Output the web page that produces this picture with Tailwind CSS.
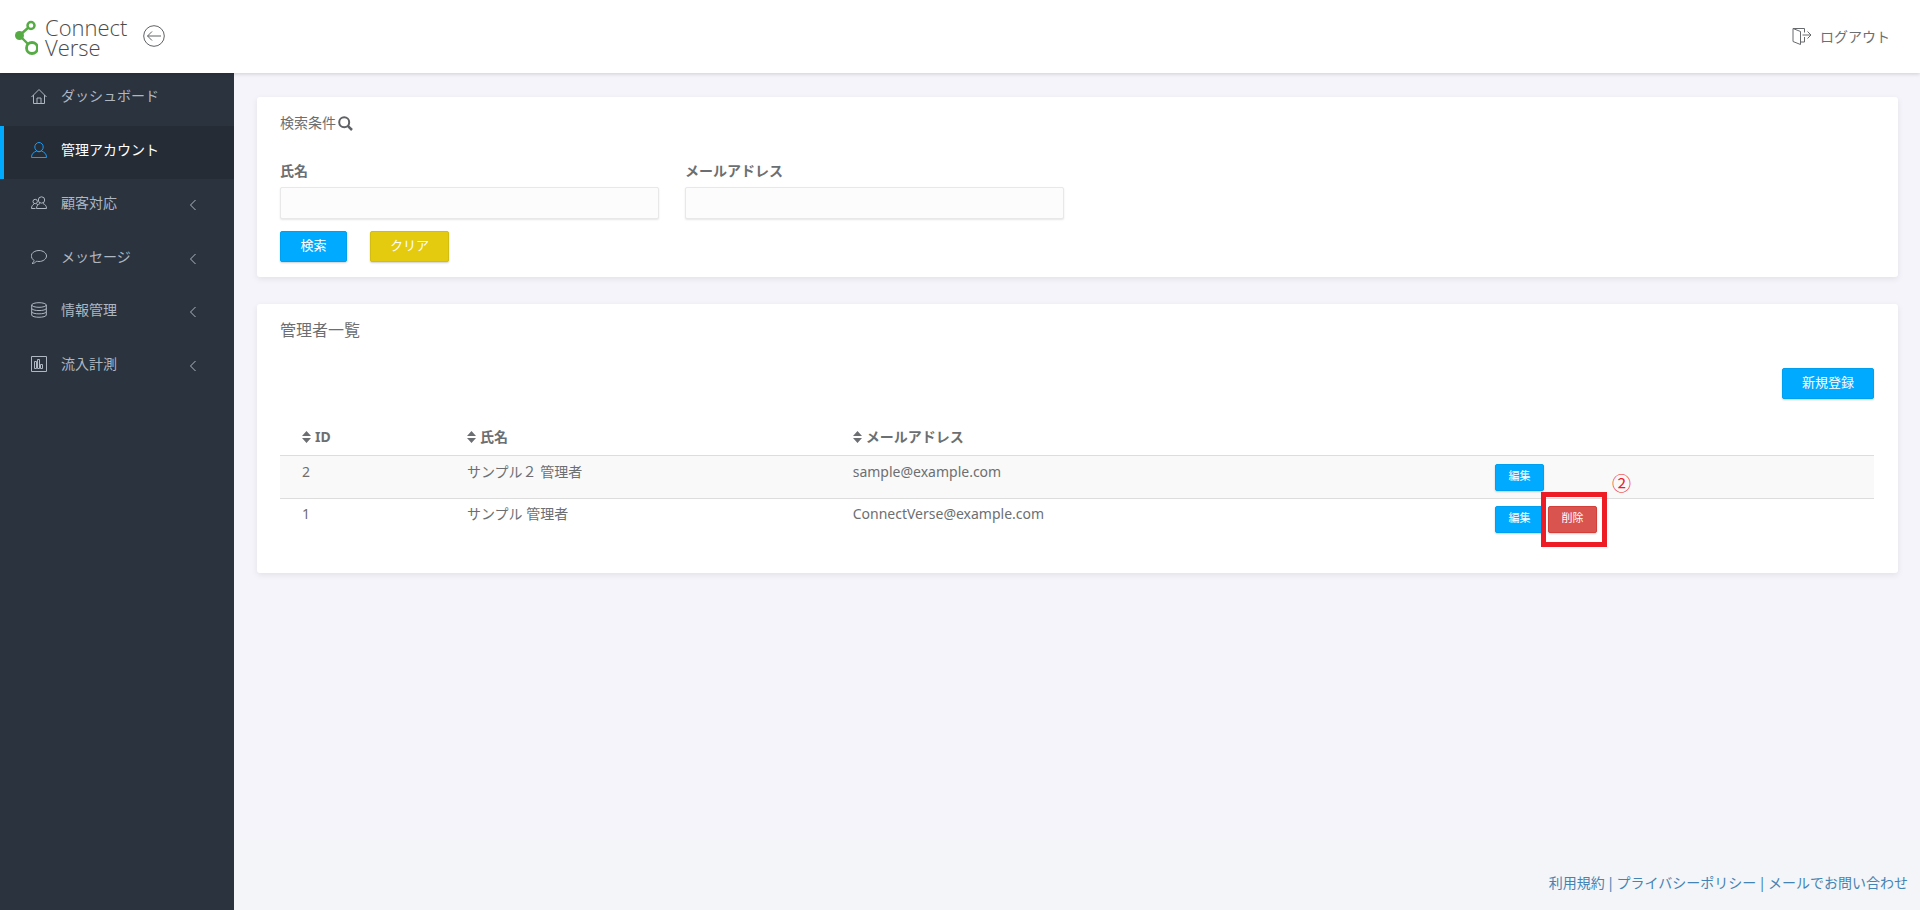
<!DOCTYPE html>
<html lang="ja">
<head>
<meta charset="utf-8">
<meta name="viewport" content="width=device-width, initial-scale=1">
<title>管理アカウント | Connect Verse</title>
<script src="https://cdn.jsdelivr.net/npm/@tailwindcss/browser@4"></script>
</head>
<body class="flex min-h-screen flex-col bg-[#f5f4fa] font-['Noto_Sans','Noto_Sans_CJK_JP',sans-serif] text-sm text-[#6c6f72]">

<header class="relative z-10 flex h-[73px] items-center justify-between bg-white pr-[30px] pl-[14px] shadow-[0_1px_4px_rgba(0,0,0,0.16)]">
  <div class="flex items-center gap-4">
    <a href="#" class="flex items-center gap-[7px] text-[#4c4c4c]" aria-label="Connect Verse">
      <svg class="h-9 w-6" viewBox="0 0 24 36" fill="none" stroke="#57ab45">
        <path d="M6 16 15 8M7 18l9 9" stroke-width="2.4"/>
        <circle cx="5.500" cy="16.500" r="4.500" fill="#57ab45" stroke="none"/>
        <circle cx="17" cy="6.500" r="3.500" stroke-width="2.500" fill="#fff"/>
        <circle cx="18" cy="29" r="5.500" stroke-width="2.800" fill="#fff"/>
      </svg>
      <span class="font-['Open_Sans',sans-serif] text-[22px] leading-5 font-light">Connect<br>Verse</span>
    </a>
    <button type="button" aria-label="メニューを閉じる" class="mb-0.5 cursor-pointer">
      <svg class="size-[22px]" viewBox="0 0 22 22" fill="none" stroke="#5f6265" stroke-width="1"><circle cx="11" cy="11" r="10.300"/><path d="M18 11H4.500M9 6.500 4.500 11 9 15.500"/></svg>
    </button>
  </div>
  <a href="#" class="flex items-center gap-2">
    <svg class="h-[19px] w-5" viewBox="0 0 20 19" fill="none" stroke="#676a6d"><path d="M1 1.500h11.500v4M12.500 10v5H8.500M1 1.500l7.500 3v13L1 14.500zM10.500 8h8.500M15.500 4.500 19 8l-3.500 3.500"/></svg>
    ログアウト
  </a>
</header>

<div class="flex flex-1">
  <nav class="w-[234px] shrink-0 bg-[#2b333e] text-[#aeb7c2]">
    <ul>
      <li><a href="#" class="flex h-[53px] items-center gap-3.5 pr-[37px] pb-2 pl-[31px]">
        <svg class="size-4" viewBox="0 0 16 16" fill="none" stroke="currentColor"><path d="M.5 9 8 1.500 15.500 9M2.500 7v8.500h11V7M6 15.500V10h4v5.500"/></svg>
        ダッシュボード</a></li>
      <li><a href="#" aria-current="page" class="flex h-[53px] items-center gap-3.5 border-l-4 border-[#00aaff] bg-[#252c35] pr-[37px] pb-1.5 pl-[27px] text-white">
        <svg class="size-4" viewBox="0 0 16 16" fill="none" stroke="#1b9bf5"><ellipse cx="8" cy="5" rx="4.200" ry="4.500"/><path d="M5.500 9C2.500 10.500.5 11.500.5 15.500h15C15.500 11.500 13.500 10.500 10.500 9M5.500 9c1.500 1 3.500 1 5 0"/></svg>
        管理アカウント</a></li>
      <li><a href="#" class="flex h-[54px] items-center gap-3.5 pr-[37px] pb-1.5 pl-[31px]">
        <svg class="size-4" viewBox="0 0 16 16" fill="none" stroke="currentColor"><circle cx="10.500" cy="5" r="3.200"/><path d="M5.500 13.500c0-3 1.500-4 3.500-5M12 8.500c2 1 3.500 2 3.500 5h-10"/><circle cx="4.200" cy="6.500" r="2.200"/><path d="M4.500 13.500h-4c0-2.500 1-3.500 2.500-4.500M5.500 9l1.500 1"/></svg>
        <span class="flex-1">顧客対応</span>
        <svg class="mt-1 h-3 w-2" viewBox="0 0 8 12" fill="none" stroke="currentColor"><path d="M6.500 1 1.500 6l5 5"/></svg></a></li>
      <li><a href="#" class="flex h-[54px] items-center gap-3.5 pr-[37px] pb-1.5 pl-[31px]">
        <svg class="size-4" viewBox="0 0 16 16" fill="none" stroke="currentColor"><path d="M3 11.500C-3 6.500 2 1.500 8 1.500c4 0 7.500 2.500 7.500 5.500S12 12.500 8 12.500c-1 0-2-.2-2.500-.3C4.500 13.500 3 14.500 1 14.500c1-.8 2-2 2-3z"/></svg>
        <span class="flex-1">メッセージ</span>
        <svg class="mt-1 h-3 w-2" viewBox="0 0 8 12" fill="none" stroke="currentColor"><path d="M6.500 1 1.500 6l5 5"/></svg></a></li>
      <li><a href="#" class="flex h-[54px] items-center gap-3.5 pr-[37px] pb-2 pl-[31px]">
        <svg class="size-4" viewBox="0 0 16 16" fill="none" stroke="currentColor"><ellipse cx="8" cy="3" rx="7.300" ry="2.300"/><path d="M.7 3v10c0 3 14.600 3 14.600 0V3M.7 6.300c0 3 14.600 3 14.600 0M.7 9.600c0 3 14.600 3 14.600 0"/></svg>
        <span class="flex-1">情報管理</span>
        <svg class="mt-1 h-3 w-2" viewBox="0 0 8 12" fill="none" stroke="currentColor"><path d="M6.500 1 1.500 6l5 5"/></svg></a></li>
      <li><a href="#" class="flex h-[54px] items-center gap-3.5 pr-[37px] pb-2 pl-[31px]">
        <svg class="size-4" viewBox="0 0 16 16" fill="none" stroke="currentColor"><path d="M.5.5h15v15H.5zM3.500 12.500v-7h2v7zM6.500 12.500v-9h2v9zM9.500 12.500v-4h2v4z"/></svg>
        <span class="flex-1">流入計測</span>
        <svg class="mt-1 h-3 w-2" viewBox="0 0 8 12" fill="none" stroke="currentColor"><path d="M6.500 1 1.500 6l5 5"/></svg></a></li>
    </ul>
  </nav>

  <div class="flex min-w-0 flex-1 flex-col">
    <main class="flex flex-1 flex-col gap-[27px] pt-6 pr-[22px] pb-6 pl-[23px]">
      <section class="rounded-[3px] bg-white pt-4 pr-6 pb-[15px] pl-[23px] shadow-[0_2px_6px_rgba(0,0,0,0.08)]">
        <h2 class="flex items-center gap-0.5 leading-5">検索条件
          <svg class="size-[15px]" viewBox="0 0 15 15" fill="none" stroke="#5f6265"><circle cx="6.200" cy="6.200" r="5" stroke-width="2"/><path d="m9.800 9.800 4.200 4.200" stroke-width="2.500"/></svg>
        </h2>
        <form class="mt-7">
          <div class="grid grid-cols-4 gap-x-[26px]">
            <div>
              <label for="name" class="mb-1.5 block leading-5 font-bold">氏名</label>
              <input id="name" type="text" class="block h-8 w-full rounded-[2px] border border-[#e8e8e8] bg-[#fcfcfc] px-3 shadow-[0_1px_2px_rgba(0,0,0,0.1)]">
            </div>
            <div>
              <label for="mail" class="mb-1.5 block leading-5 font-bold">メールアドレス</label>
              <input id="mail" type="text" class="block h-8 w-full rounded-[2px] border border-[#e8e8e8] bg-[#fcfcfc] px-3 shadow-[0_1px_2px_rgba(0,0,0,0.1)]">
            </div>
          </div>
          <div class="mt-3 flex gap-[23px]">
            <button type="button" class="h-[31px] w-[67px] rounded-[2px] border border-[#00a0f0] bg-[#00aaff] pb-0.5 text-[13px] text-white shadow-[0_1px_2px_rgba(0,0,0,0.2)]">検索</button>
            <button type="reset" class="h-[31px] w-[79px] rounded-[2px] border border-[#d3bd10] bg-[#e4cb10] pb-0.5 text-[13px] text-white shadow-[0_1px_2px_rgba(0,0,0,0.2)]">クリア</button>
          </div>
        </form>
      </section>

      <section class="rounded-[3px] bg-white pt-3.5 pr-6 pb-[33px] pl-[23px] shadow-[0_2px_6px_rgba(0,0,0,0.08)]">
        <h2 class="text-base leading-6">管理者一覧</h2>
        <div class="mt-[26px] flex justify-end">
          <button type="button" class="h-[31px] rounded-[2px] border border-[#00a0f0] bg-[#00aaff] px-[19px] pb-0.5 text-[13px] text-white shadow-[0_1px_2px_rgba(0,0,0,0.2)]">新規登録</button>
        </div>
        <table class="mt-5 w-full table-fixed text-left">
          <colgroup><col class="w-[10.35%]"><col class="w-[24.2%]"><col class="w-[40.3%]"><col></colgroup>
          <thead>
            <tr>
              <th class="h-9 px-[22px]"><span class="flex items-center gap-1"><svg class="h-3 w-[9px]" viewBox="0 0 9 12" fill="currentColor"><path d="M4.500 0 9 5H0zM0 7h9l-4.500 5z"/></svg>ID</span></th>
              <th class="h-9 px-[22px]"><span class="flex items-center gap-1"><svg class="h-3 w-[9px]" viewBox="0 0 9 12" fill="currentColor"><path d="M4.500 0 9 5H0zM0 7h9l-4.500 5z"/></svg>氏名</span></th>
              <th class="h-9 px-[22px]"><span class="flex items-center gap-1"><svg class="h-3 w-[9px]" viewBox="0 0 9 12" fill="currentColor"><path d="M4.500 0 9 5H0zM0 7h9l-4.500 5z"/></svg>メールアドレス</span></th>
              <th class="h-9 px-[22px]" aria-label="操作"></th>
            </tr>
          </thead>
          <tbody>
            <tr class="border-t border-[#ddd] bg-[#f9f9f9] align-top">
              <td class="px-[22px] pt-1.5 leading-5">2</td>
              <td class="px-[22px] pt-1.5 leading-5">サンプル２ 管理者</td>
              <td class="px-[22px] pt-1.5 leading-5">sample@example.com</td>
              <td class="px-[22px] pt-2 pb-[7px]"><div class="flex gap-1">
                <button type="button" class="h-[27px] w-[49px] rounded-[2px] border border-[#00a0f0] bg-[#00aaff] pb-0.5 text-[11px] text-white shadow-[0_1px_2px_rgba(0,0,0,0.2)]">編集</button>
              </div></td>
            </tr>
            <tr class="border-t border-[#ddd] align-top">
              <td class="px-[22px] pt-[5px] leading-5">1</td>
              <td class="px-[22px] pt-[5px] leading-5">サンプル 管理者</td>
              <td class="px-[22px] pt-[5px] leading-5">ConnectVerse@example.com</td>
              <td class="px-[22px] py-[7px]"><div class="flex gap-1">
                <button type="button" class="h-[27px] w-[49px] rounded-[2px] border border-[#00a0f0] bg-[#00aaff] pb-0.5 text-[11px] text-white shadow-[0_1px_2px_rgba(0,0,0,0.2)]">編集</button>
                <div class="relative">
                  <button type="button" class="h-[27px] w-[49px] rounded-[2px] border border-[#d43f3a] bg-[#d9534f] pb-0.5 text-[11px] text-white shadow-[0_1px_2px_rgba(0,0,0,0.2)]">削除</button>
                  <div class="pointer-events-none absolute -top-3.5 -left-[7px] h-[55px] w-[66px] border-5 border-[#ee1c24]"></div>
                  <span class="absolute -top-8 left-16 text-[19px] leading-5 text-[#ee1c24]">②</span>
                </div>
              </div></td>
            </tr>
          </tbody>
        </table>
      </section>
    </main>
    <footer class="flex h-[70px] items-center justify-end gap-0.5 bg-[#f3f5f8] pt-4 pr-3 text-[#4484b4]">
      <a href="#">利用規約</a><span>|</span><a href="#">プライバシーポリシー</a><span>|</span><a href="#">メールでお問い合わせ</a>
    </footer>
  </div>
</div>
</body>
</html>
